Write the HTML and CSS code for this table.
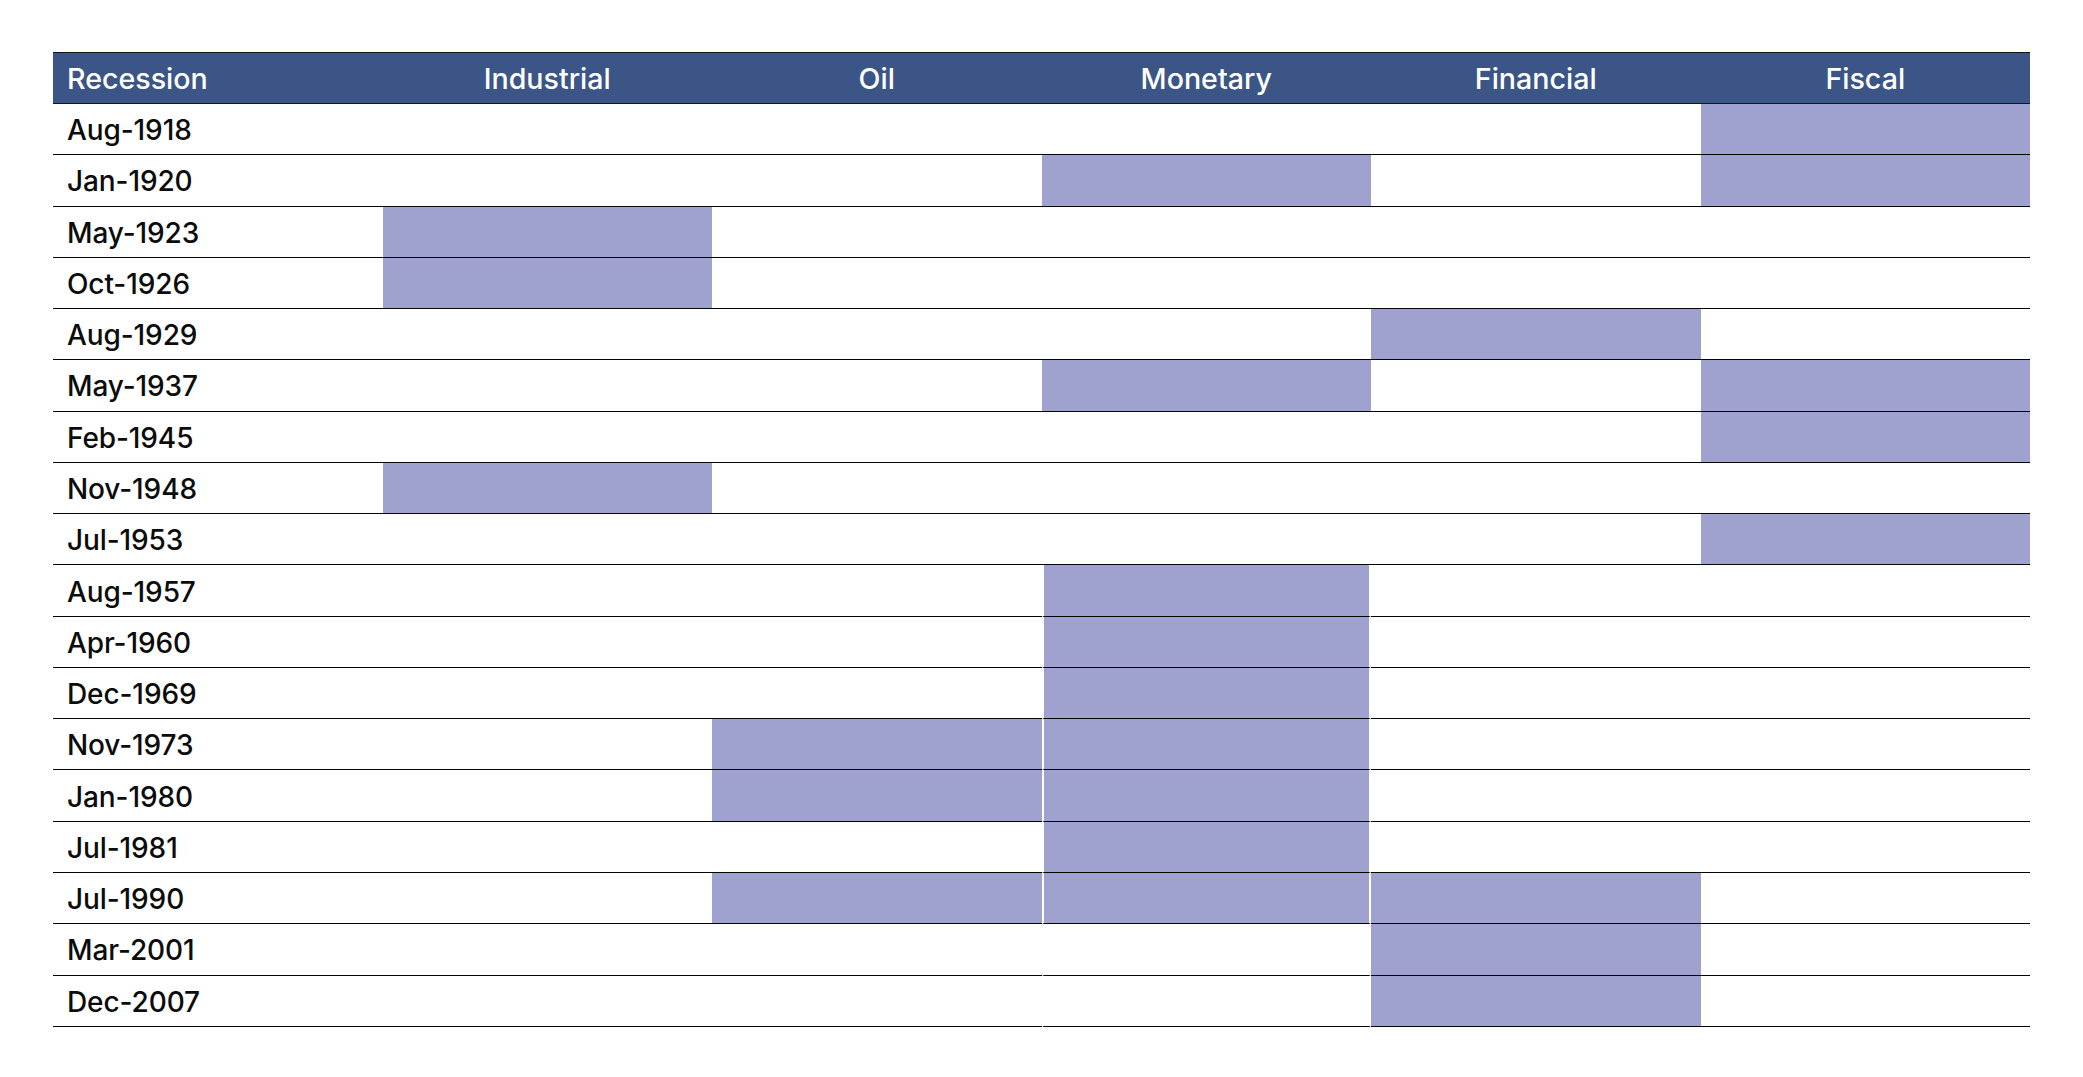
FILE: index.html
```html
<!DOCTYPE html>
<html lang="en">
<head>
<meta charset="utf-8">
<title>Recessions by cause</title>
<link rel="stylesheet" href="styles.css">
</head>
<body>
<div class="page">
  <div class="table">
    <div class="row head">
      <div class="cell label">Recession</div>
      <div class="cell">Industrial</div>
      <div class="cell">Oil</div>
      <div class="cell">Monetary</div>
      <div class="cell">Financial</div>
      <div class="cell">Fiscal</div>
    </div>
    <div class="row"><div class="cell label">Aug-1918</div><div class="cell"></div><div class="cell"></div><div class="cell"></div><div class="cell"></div><div class="cell on"></div></div>
    <div class="row"><div class="cell label">Jan-1920</div><div class="cell"></div><div class="cell"></div><div class="cell on"></div><div class="cell"></div><div class="cell on"></div></div>
    <div class="row"><div class="cell label">May-1923</div><div class="cell on"></div><div class="cell"></div><div class="cell"></div><div class="cell"></div><div class="cell"></div></div>
    <div class="row"><div class="cell label">Oct-1926</div><div class="cell on"></div><div class="cell"></div><div class="cell"></div><div class="cell"></div><div class="cell"></div></div>
    <div class="row"><div class="cell label">Aug-1929</div><div class="cell"></div><div class="cell"></div><div class="cell"></div><div class="cell on"></div><div class="cell"></div></div>
    <div class="row"><div class="cell label">May-1937</div><div class="cell"></div><div class="cell"></div><div class="cell on"></div><div class="cell"></div><div class="cell on"></div></div>
    <div class="row"><div class="cell label">Feb-1945</div><div class="cell"></div><div class="cell"></div><div class="cell"></div><div class="cell"></div><div class="cell on"></div></div>
    <div class="row"><div class="cell label">Nov-1948</div><div class="cell on"></div><div class="cell"></div><div class="cell"></div><div class="cell"></div><div class="cell"></div></div>
    <div class="row"><div class="cell label">Jul-1953</div><div class="cell"></div><div class="cell"></div><div class="cell"></div><div class="cell"></div><div class="cell on"></div></div>
    <div class="row"><div class="cell label">Aug-1957</div><div class="cell"></div><div class="cell"></div><div class="cell on inset"></div><div class="cell"></div><div class="cell"></div></div>
    <div class="row"><div class="cell label">Apr-1960</div><div class="cell"></div><div class="cell"></div><div class="cell on inset"></div><div class="cell"></div><div class="cell"></div></div>
    <div class="row"><div class="cell label">Dec-1969</div><div class="cell"></div><div class="cell"></div><div class="cell on inset"></div><div class="cell"></div><div class="cell"></div></div>
    <div class="row"><div class="cell label">Nov-1973</div><div class="cell"></div><div class="cell on"></div><div class="cell on inset"></div><div class="cell"></div><div class="cell"></div></div>
    <div class="row"><div class="cell label">Jan-1980</div><div class="cell"></div><div class="cell on"></div><div class="cell on inset"></div><div class="cell"></div><div class="cell"></div></div>
    <div class="row"><div class="cell label">Jul-1981</div><div class="cell"></div><div class="cell"></div><div class="cell on inset"></div><div class="cell"></div><div class="cell"></div></div>
    <div class="row"><div class="cell label">Jul-1990</div><div class="cell"></div><div class="cell on"></div><div class="cell on inset"></div><div class="cell on"></div><div class="cell"></div></div>
    <div class="row"><div class="cell label">Mar-2001</div><div class="cell"></div><div class="cell"></div><div class="cell inset"></div><div class="cell on"></div><div class="cell"></div></div>
    <div class="row"><div class="cell label">Dec-2007</div><div class="cell"></div><div class="cell"></div><div class="cell inset"></div><div class="cell on"></div><div class="cell"></div></div>
  </div>
</div>
</body>
</html>
```
FILE: styles.css
```css
html, body {
  margin: 0;
  padding: 0;
  background: #ffffff;
}

.page {
  padding: 52px 0 0 53px;
  font-family: Inter, "Liberation Sans", Arial, sans-serif;
}

.table {
  width: 1977px;
  display: flex;
  flex-direction: column;
}

.row {
  display: grid;
  grid-template-columns: repeat(6, 1fr);
  height: 51.28px;
}

.cell {
  box-sizing: border-box;
  border-bottom: 1px solid #050505;
  display: flex;
  align-items: center;
  justify-content: center;
  padding-top: 2px;
  font-size: 28px;
  font-weight: 500;
  color: #0c0c0c;
  letter-spacing: -0.1px;
}

.cell.label {
  justify-content: flex-start;
  padding-left: 14px;
}

.cell.on {
  background: #9fa1ce;
}

.cell.inset {
  border-left: 2px solid #ffffff;
  border-right: 2px solid #ffffff;
}

.head {
  height: 52px;
  background: #3c5587;
  border-top: 1px solid #161616;
  border-bottom: 1px solid #161616;
  box-sizing: border-box;
}

.head .cell {
  color: #ffffff;
  padding-top: 0;
  font-size: 28.6px;
  font-weight: 500;
  letter-spacing: 0;
  border-bottom: none;
}
```
